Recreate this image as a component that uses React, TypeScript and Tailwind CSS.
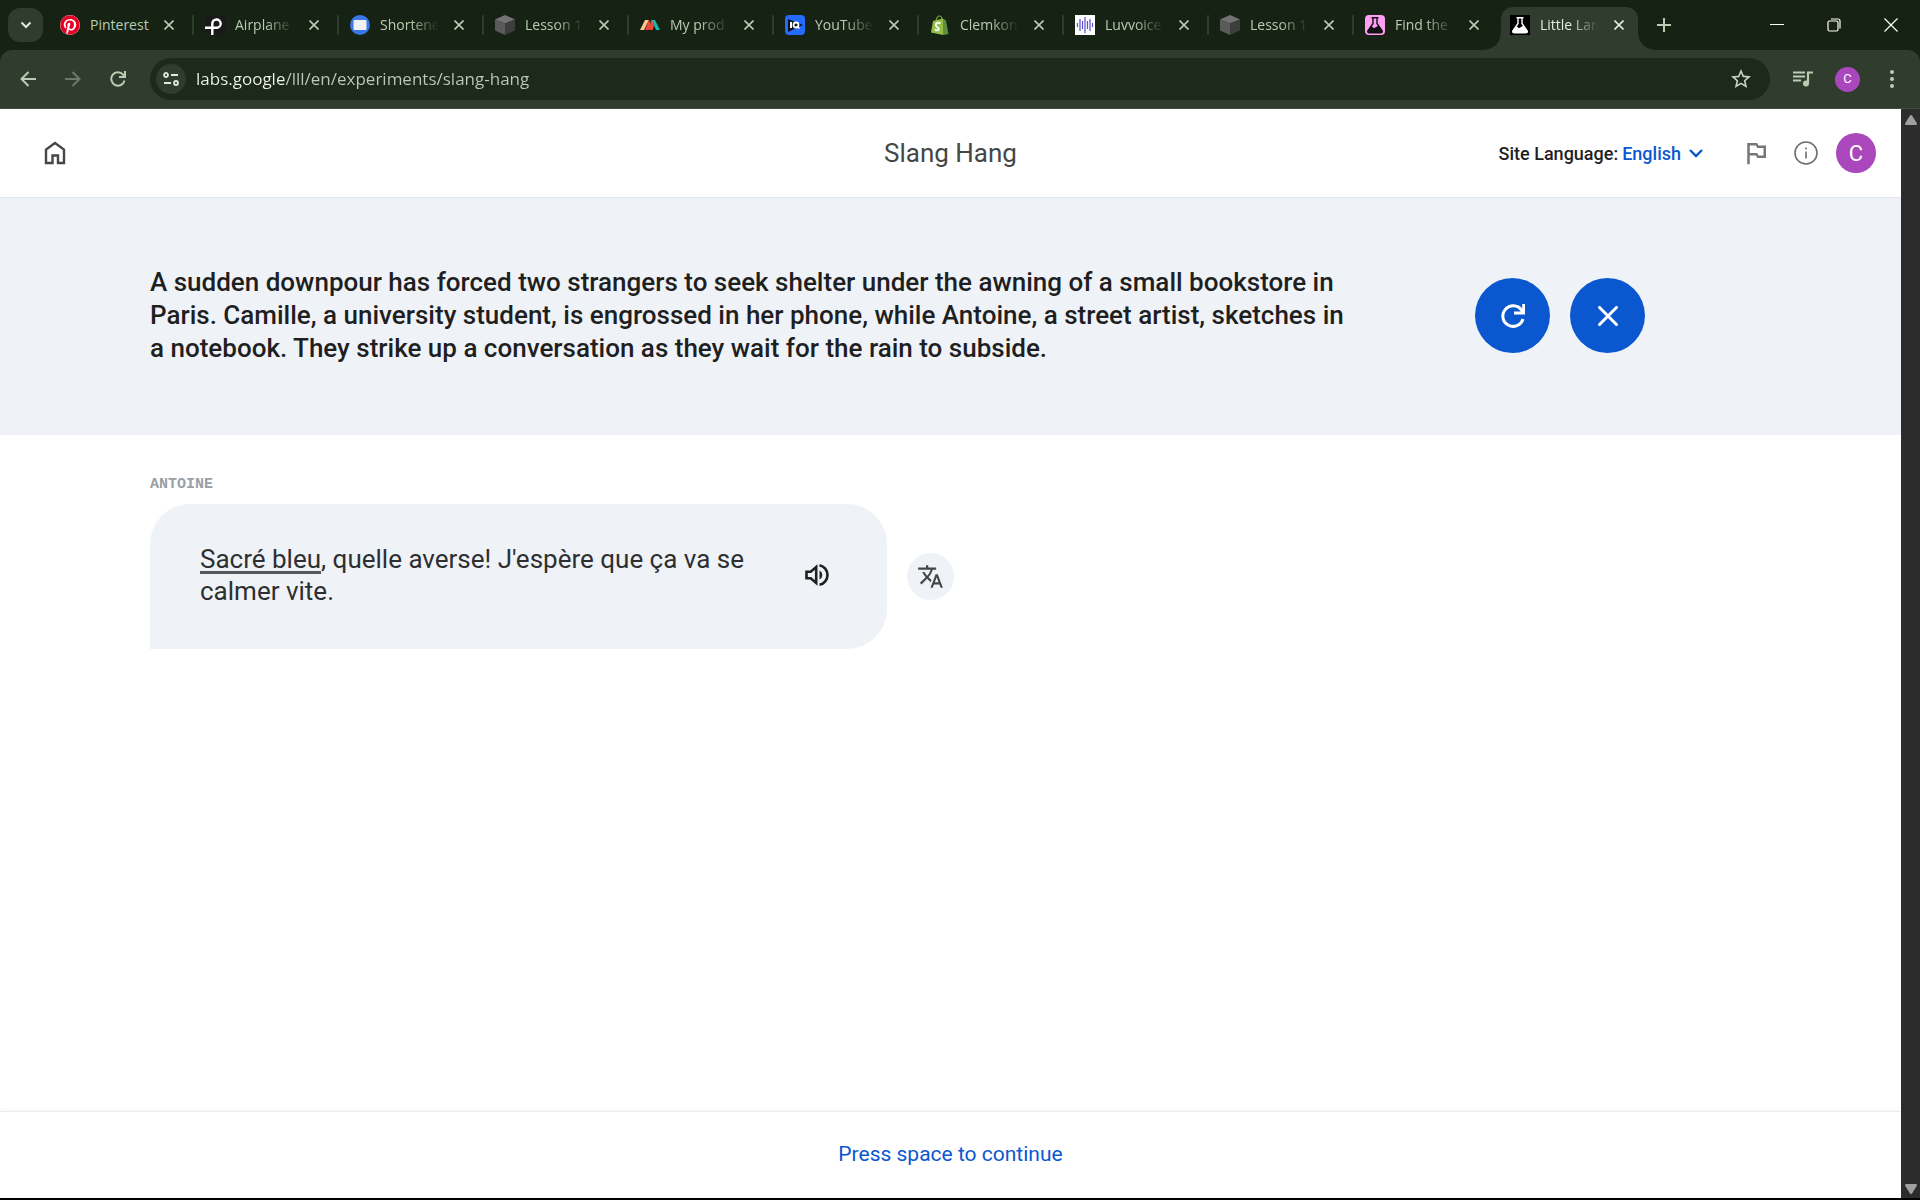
import type { ReactNode } from 'react';
import { FaPinterest } from 'react-icons/fa';
import { MdOutlinedFlag, MdStarBorder, MdTranslate } from 'react-icons/md';

interface Tab {
  title: string;
  icon: ReactNode;
  faded?: boolean;
}

function CubeIcon() {
  return (
    <svg viewBox="0 0 20 20" className="size-5">
      <path d="M10 0l10 4.5L10 8.5 0 4.5z" fill="#737373" />
      <path d="M0 4.5l10 4V20L0 15.5z" fill="#5a5a5a" />
      <path d="M20 4.5l-10 4V20l10-4.5z" fill="#3d3d3d" />
    </svg>
  );
}

function FlaskIcon({ className, color }: { className: string; color: string }) {
  return (
    <svg viewBox="0 0 20 20" className={`size-5 ${className}`}>
      <path
        d="M6.5 2.7h7M8 3v5.5L3 15.700c-.6 1 .1 2.100 1.200 2.100h11.600c1.100 0 1.800-1.100 1.200-2.100L12 8.500V3"
        fill="none"
        stroke={color}
        strokeWidth="1.400"
      />
      <path
        d="M6.300 11l2.700 2.200L13.500 10.500l4 5.500c.5 1-.1 2-1.200 2H3.900c-1.100 0-1.800-1-1.200-2z"
        fill={color}
      />
    </svg>
  );
}

const tabs: Tab[] = [
  {
    title: 'Pinterest',
    icon: (
      <span className="flex size-5 rounded-full bg-white">
        <FaPinterest className="size-5 text-[#e60023]" />
      </span>
    ),
  },
  {
    title: 'Airplane',
    faded: true,
    icon: (
      <svg viewBox="0 0 20 20" className="size-5">
        <rect width="20" height="20" rx="2" fill="#1a1a1a" />
        <path d="M0 12.800h12a4.200 4.200 0 1 0-4.700-4.300V20" fill="none" stroke="#fff" strokeWidth="2.400" />
      </svg>
    ),
  },
  {
    title: 'Shortene',
    faded: true,
    icon: (
      <svg viewBox="0 0 20 20" className="size-5">
        <circle cx="10" cy="10" r="10" fill="#3b78e7" />
        <rect x="3.500" y="5" width="13" height="10" rx="1" fill="#f1f1f1" />
      </svg>
    ),
  },
  { title: 'Lesson 1', faded: true, icon: <CubeIcon /> },
  {
    title: 'My prod',
    faded: true,
    icon: (
      <svg viewBox="0 0 20 20" className="size-5">
        <path d="M0 15L5 5h4L4 15z" fill="#fbc78d" />
        <path d="M5 15l4-10 2 5-2 5z" fill="#f4473c" />
        <path d="M9.500 15L11 5h2l1 6-1.500 4z" fill="#f4473c" />
        <path d="M12 5h3l5 10h-4z" fill="#15b8b0" />
      </svg>
    ),
  },
  {
    title: 'YouTube',
    faded: true,
    icon: (
      <svg viewBox="0 0 20 20" className="size-5">
        <rect width="20" height="20" rx="4" fill="#246bfd" />
        <path d="M3 4l15 6-15 7z" fill="#0b1020" />
        <path d="M6 7v6" stroke="#fff" strokeWidth="2" />
        <circle cx="11" cy="10" r="2.500" fill="none" stroke="#fff" strokeWidth="1.800" />
        <path d="M11.500 11l3 2.500" stroke="#fff" strokeWidth="1.500" />
      </svg>
    ),
  },
  {
    title: 'Clemkon',
    faded: true,
    icon: (
      <svg viewBox="0 0 20 20" className="size-5">
        <path d="M6 6c.5-3 2-5 3.500-5S12 3 12 5" fill="none" stroke="#7ea83a" strokeWidth="1.200" />
        <path d="M3 6l10-2.500V20L1 17.500z" fill="#95bf47" />
        <path d="M13 3.500l3 2L18.500 19 13 20z" fill="#5e8e3e" />
        <path
          d="M10.500 8.500C8 7 5.800 8 5.800 10c0 2.200 3 2.200 3 4 0 1.500-2 1.800-4 .5"
          fill="none"
          stroke="#fff"
          strokeWidth="1.800"
        />
      </svg>
    ),
  },
  {
    title: 'Luvvoice',
    faded: true,
    icon: (
      <svg viewBox="0 0 20 20" className="size-5">
        <rect width="20" height="20" fill="#fff" />
        <path
          d="M2.500 8v4M5 4v12M7.500 6v8M10 2v16M12.500 6v8M15 4v12M17.500 8v4"
          stroke="#5a4fcf"
          strokeWidth="1.200"
        />
      </svg>
    ),
  },
  { title: 'Lesson 1', faded: true, icon: <CubeIcon /> },
  { title: 'Find the', faded: true, icon: <FlaskIcon className="rounded bg-[#ff9ff3]" color="#111" /> },
  { title: 'Little Lan', faded: true, icon: <FlaskIcon className="bg-black" color="#fff" /> },
];

function CloseMark() {
  return (
    <svg viewBox="0 0 10 10" className="size-[10px]" fill="none" stroke="currentColor" strokeWidth="1.600">
      <path d="M.5.5l9 9M9.500.5l-9 9" />
    </svg>
  );
}

function TabStrip() {
  const activeIndex = tabs.length - 1;

  return (
    <div className="flex h-[50px] items-end bg-[#162213] pl-2 text-[#b9cdb3]">
      <button
        aria-label="Search tabs"
        className="mb-2 flex h-[34px] w-[35px] items-center justify-center rounded-xl bg-[#303d2e] text-[#dfe9da]"
      >
        <svg viewBox="0 0 12 8" className="h-2 w-3" fill="none" stroke="currentColor" strokeWidth="2">
          <path d="M1.500 1.500L6 6l4.500-4.500" />
        </svg>
      </button>
      <div className="ml-2 flex">
        {tabs.map((tab, i) => {
          const active = i === activeIndex;
          return (
            <div key={i} className="relative flex h-[43px] w-[145px] shrink-0 pr-2">
              <div
                className={`flex flex-1 items-center pr-[14px] pb-[7px] pl-[9px] ${
                  active ? 'rounded-t-xl bg-[#303d2e] text-[#e2ebde]' : ''
                }`}
              >
                {tab.icon}
                <span
                  className={`ml-[10px] w-[60px] text-[14px] leading-5 whitespace-nowrap ${
                    tab.faded ? '[mask-image:linear-gradient(90deg,#000_50%,transparent_98%)]' : ''
                  }`}
                >
                  {tab.title}
                </span>
                <button aria-label={`Close ${tab.title}`} className="ml-auto">
                  <CloseMark />
                </button>
              </div>
              {i < activeIndex - 1 && (
                <span className="absolute top-2 right-[2px] h-5 w-[2px] rounded bg-[#303d2e]" />
              )}
              {active && (
                <>
                  <span className="absolute bottom-0 -left-4 size-4 bg-[radial-gradient(circle_at_0_0,transparent_15px,#303d2e_16px)]" />
                  <span className="absolute -right-2 bottom-0 size-4 bg-[radial-gradient(circle_at_100%_0,transparent_15px,#303d2e_16px)]" />
                </>
              )}
            </div>
          );
        })}
      </div>
      <button aria-label="New tab" className="mb-[18px] ml-[11px]">
        <svg viewBox="0 0 14 14" className="size-[14px]" fill="none" stroke="currentColor" strokeWidth="2">
          <path d="M7 0v14M0 7h14" />
        </svg>
      </button>
      <div className="mb-[18px] ml-auto flex items-center gap-[43px] pr-[22px] text-white">
        <button aria-label="Minimize">
          <svg viewBox="0 0 14 14" className="size-[14px]" stroke="currentColor">
            <path d="M0 6.500h14" />
          </svg>
        </button>
        <button aria-label="Restore">
          <svg viewBox="0 0 14 14" className="size-[14px]" fill="none" stroke="currentColor" strokeWidth="1.200">
            <rect x="1" y="3" width="10" height="10" rx="1.500" />
            <path d="M4 1h7a2 2 0 0 1 2 2v7.500" />
          </svg>
        </button>
        <button aria-label="Close window">
          <svg viewBox="0 0 14 14" className="size-[14px]" stroke="currentColor" strokeWidth="1.200">
            <path d="M.5.5l13 13M13.500.5l-13 13" />
          </svg>
        </button>
      </div>
    </div>
  );
}

function Toolbar() {
  return (
    <div className="bg-[#162213]">
      <div className="flex h-[59px] items-center rounded-t-xl border-b border-[#454c43] bg-[#303d2e] pr-[19px] pl-5 text-[#b9cdb3]">
        <button aria-label="Back">
          <svg viewBox="0 0 16 16" className="size-4" fill="none" stroke="currentColor" strokeWidth="2">
            <path d="M16 8H1.500M8.500 1L1.500 8l7 7" />
          </svg>
        </button>
        <button aria-label="Forward" className="ml-[29px] text-[#6b7968]">
          <svg viewBox="0 0 16 16" className="size-4" fill="none" stroke="currentColor" strokeWidth="2">
            <path d="M0 8h14.500M7.500 1l7 7-7 7" />
          </svg>
        </button>
        <button aria-label="Reload" className="ml-[29px]">
          <svg viewBox="0 0 16 16" className="size-4" fill="none" stroke="currentColor" strokeWidth="2">
            <path d="M14.500 9.500A6.700 6.700 0 1 1 13 3.500l1.500 1.500M15 0v6H9" />
          </svg>
        </button>
        <div className="ml-6 flex h-[42px] flex-1 items-center rounded-full bg-[#1d291b] pr-[17px] pl-[6px]">
          <button
            aria-label="View site information"
            className="flex size-[30px] items-center justify-center rounded-full bg-[#303d2e] text-[#dfe9da]"
          >
            <svg viewBox="0 0 16 16" className="size-4" fill="none" stroke="currentColor" strokeWidth="1.800">
              <circle cx="3" cy="4" r="2" />
              <path d="M8 4h7M1 12h7" />
              <circle cx="13" cy="12" r="2" />
            </svg>
          </button>
          <input
            aria-label="Address"
            defaultValue="labs.google/lll/en/experiments/slang-hang"
            className="ml-[10px] flex-1 bg-[linear-gradient(90deg,#f1f6ee_88px,#c0c9bb_88px)] bg-clip-text text-[17px] text-transparent outline-none"
          />
          <button aria-label="Bookmark this tab">
            <MdStarBorder className="size-6 text-[#cbd2c7]" />
          </button>
        </div>
        <button aria-label="Media controls" className="ml-[23px]">
          <svg viewBox="0 0 20 16" className="h-4 w-5" fill="none" stroke="currentColor" strokeWidth="2.200">
            <path d="M0 1.500h12M0 5.500h12M0 9.500h8M15 12V1.500h5" />
            <circle cx="13" cy="12.500" r="3" fill="currentColor" stroke="none" />
          </svg>
        </button>
        <button
          aria-label="Profile"
          className="ml-[22px] size-[25px] rounded-full bg-[#ab47bc] font-[Roboto] text-[13px] text-white"
        >
          C
        </button>
        <button aria-label="Menu" className="ml-[23px]">
          <svg viewBox="0 0 18 18" className="size-[18px]" fill="currentColor">
            <circle cx="9" cy="2" r="2" />
            <circle cx="9" cy="9" r="2" />
            <circle cx="9" cy="16" r="2" />
          </svg>
        </button>
      </div>
    </div>
  );
}

function SiteHeader() {
  return (
    <header className="grid h-[89px] grid-cols-[1fr_auto_1fr] items-center border-b border-[#e1e6ec] px-[25px]">
      <a href="#home" aria-label="Home" className="ml-[18px] justify-self-start text-[#444746]">
        <svg viewBox="0 0 24 24" className="size-6" fill="none" stroke="currentColor" strokeWidth="2.400">
          <path d="M3 22V8.500L12 2l9 6.500V22h-6v-7.500H9.500V22z" />
        </svg>
      </a>
      <h1 className="text-[26px] leading-8 text-[#444746]">Slang Hang</h1>
      <div className="flex items-center justify-self-end">
        <label htmlFor="site-language" className="text-[18px] font-medium text-[#1f1f1f]">
          Site Language:
        </label>
        <select
          id="site-language"
          className="ml-1 appearance-none [field-sizing:content] text-[18px] font-medium text-[#0b57d0] outline-none"
        >
          <option>English</option>
        </select>
        <svg viewBox="0 0 14 9" className="ml-2 h-[9px] w-[14px]" fill="none" stroke="#0b57d0" strokeWidth="2.400">
          <path d="M1 1l6 6 6-6" />
        </svg>
        <button aria-label="Send feedback" className="ml-[38px] text-[#747775]">
          <MdOutlinedFlag className="size-[30px]" />
        </button>
        <button aria-label="About" className="ml-[23px]">
          <svg viewBox="0 0 24 24" className="size-6" fill="none" stroke="#6b6e70" strokeWidth="1.600">
            <circle cx="12" cy="12" r="11" />
            <path d="M12 10.500v7M12 6.500v2" />
          </svg>
        </button>
        <button aria-label="Account" className="ml-[18px] size-10 rounded-full bg-[#ab47bc] text-[22px] text-white">
          C
        </button>
      </div>
    </header>
  );
}

function Scenario() {
  return (
    <section className="flex items-center bg-[#eff3f8] pt-[68px] pb-[70px] pl-[150px]">
      <p className="w-[1210px] text-[26px] leading-[33px] font-medium text-[#1f1f1f]">
        A sudden downpour has forced two strangers to seek shelter under the awning of a small bookstore in
        Paris. Camille, a university student, is engrossed in her phone, while Antoine, a street artist, sketches in
        a notebook. They strike up a conversation as they wait for the rain to subside.
      </p>
      <div className="ml-[115px] flex gap-5">
        <button
          aria-label="Restart"
          className="flex size-[75px] items-center justify-center rounded-full bg-[#0b57d0] text-white"
        >
          <svg viewBox="0 0 24 24" className="size-6" fill="none" stroke="currentColor" strokeWidth="3">
            <path d="M22 15A10.300 10.300 0 1 1 20.500 6l2 2.500M22.700 0v9H13" />
          </svg>
        </button>
        <button
          aria-label="Close"
          className="flex size-[75px] items-center justify-center rounded-full bg-[#0b57d0] text-white"
        >
          <svg viewBox="0 0 20 20" className="size-5" fill="none" stroke="currentColor" strokeWidth="3">
            <path d="M.5.5l19 19M19.500.5l-19 19" />
          </svg>
        </button>
      </div>
    </section>
  );
}

function Message() {
  return (
    <section className="flex-1 pt-10 pl-[150px]">
      <h2 className="font-['Liberation_Mono',monospace] text-[15px] leading-5 font-bold text-[#9aa0a6]">ANTOINE</h2>
      <div className="mt-[9px] flex items-center gap-5">
        <div className="flex w-[737px] items-center rounded-[40px] rounded-bl-none bg-[#eff3f8] pt-[39px] pr-[58px] pb-[42px] pl-[50px]">
          <p className="w-[560px] text-[26px] leading-[32px] text-[#2d2f31]">
            <span className="underline decoration-[#55585c] decoration-3 underline-offset-3">Sacré bleu</span>, quelle
            averse! J'espère que ça va se calmer vite.
          </p>
          <button aria-label="Play audio" className="ml-auto text-[#1f1f1f]">
            <svg viewBox="0 0 24 24" className="size-6" fill="none" stroke="currentColor" strokeWidth="2.600">
              <path d="M1.500 8.700h4.200L11.200 4v16L5.700 15.300H1.500z" />
              <path d="M14.500 2.200a10 10 0 0 1 0 19.600" />
              <path d="M14.500 7.500a5 5 0 0 1 0 9z" fill="currentColor" stroke="none" />
            </svg>
          </button>
        </div>
        <button
          aria-label="Translate"
          className="flex size-[47px] items-center justify-center rounded-full bg-[#eff3f8] text-[#444746]"
        >
          <MdTranslate className="size-[27px]" />
        </button>
      </div>
    </section>
  );
}

export default function App() {
  return (
    <div className="flex min-h-screen flex-col border-b-2 border-black bg-white font-['Open_Sans',sans-serif]">
      <TabStrip />
      <Toolbar />
      <div className="flex flex-1">
        <main className="flex flex-1 flex-col font-[Roboto,sans-serif]">
          <SiteHeader />
          <Scenario />
          <Message />
          <footer className="flex h-[87px] items-center justify-center border-t border-[#ececec] shadow-[0_0_4px_rgba(0,0,0,0.06)]">
            <button className="text-[21px] text-[#0b57d0]">Press space to continue</button>
          </footer>
        </main>
        <div className="flex w-[19px] flex-col items-center justify-between bg-[#2c2c2c] pt-[6px] pb-1">
          <svg viewBox="0 0 12 10" className="h-[10px] w-3" fill="#9f9f9f">
            <path d="M5 .5q1-1 2 0l5 8q0 1.500-1 1.500H1q-1 0-1-1.500z" />
          </svg>
          <svg viewBox="0 0 12 10" className="h-[10px] w-3" fill="#9f9f9f">
            <path d="M5 9.500q1 1 2 0l5-8Q12 0 11 0H1Q0 0 0 1.500z" />
          </svg>
        </div>
      </div>
    </div>
  );
}
